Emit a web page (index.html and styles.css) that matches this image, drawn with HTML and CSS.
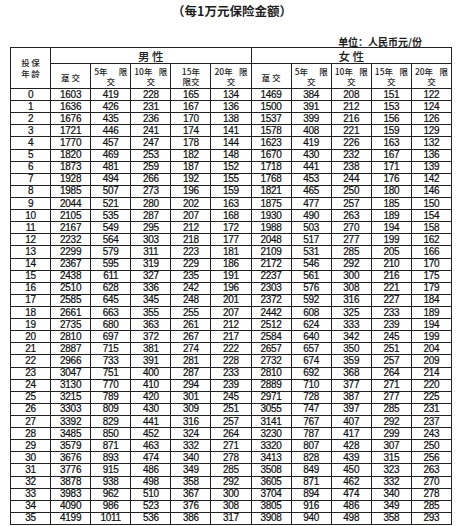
FILE: index.html
```html
<!DOCTYPE html>
<html lang="zh-CN">
<head>
<meta charset="utf-8">
<title>每1万元保险金额</title>
<link rel="stylesheet" href="styles.css">
</head>
<body>
<div class="page">
  <div class="title">（每1万元保险金额）</div>
  <div class="unit">单位：人民币元/份</div>
  <div class="grid">
    <div class="c h age"><span>投保</span><span>年龄</span></div>
    <div class="c h sex male">男性</div>
    <div class="c h sex female">女性</div>

    <div class="c h sub"><span class="one">趸交</span></div>
    <div class="c h sub"><span class="l1"><span>5年</span><span>限</span></span><span class="l2">交</span></div>
    <div class="c h sub"><span class="l1"><span>10年</span><span>限</span></span><span class="l2">交</span></div>
    <div class="c h sub"><span class="l2">15年</span><span class="l2">限交</span></div>
    <div class="c h sub"><span class="l1"><span>20年</span><span>限</span></span><span class="l2">交</span></div>
    <div class="c h sub"><span class="one">趸交</span></div>
    <div class="c h sub"><span class="l1"><span>5年</span><span>限</span></span><span class="l2">交</span></div>
    <div class="c h sub"><span class="l1"><span>10年</span><span>限</span></span><span class="l2">交</span></div>
    <div class="c h sub"><span class="l1"><span>15年</span><span>限</span></span><span class="l2">交</span></div>
    <div class="c h sub"><span class="l1"><span>20年</span><span>限</span></span><span class="l2">交</span></div>

    <div class="r"><span>0</span><span>1603</span><span>419</span><span>228</span><span>165</span><span>134</span><span>1469</span><span>384</span><span>208</span><span>151</span><span>122</span></div>
    <div class="r"><span>1</span><span>1636</span><span>426</span><span>231</span><span>167</span><span>136</span><span>1500</span><span>391</span><span>212</span><span>153</span><span>124</span></div>
    <div class="r"><span>2</span><span>1676</span><span>435</span><span>236</span><span>170</span><span>138</span><span>1537</span><span>399</span><span>216</span><span>156</span><span>126</span></div>
    <div class="r"><span>3</span><span>1721</span><span>446</span><span>241</span><span>174</span><span>141</span><span>1578</span><span>408</span><span>221</span><span>159</span><span>129</span></div>
    <div class="r"><span>4</span><span>1770</span><span>457</span><span>247</span><span>178</span><span>144</span><span>1623</span><span>419</span><span>226</span><span>163</span><span>132</span></div>
    <div class="r"><span>5</span><span>1820</span><span>469</span><span>253</span><span>182</span><span>148</span><span>1670</span><span>430</span><span>232</span><span>167</span><span>136</span></div>
    <div class="r"><span>6</span><span>1873</span><span>481</span><span>259</span><span>187</span><span>152</span><span>1718</span><span>441</span><span>238</span><span>171</span><span>139</span></div>
    <div class="r"><span>7</span><span>1928</span><span>494</span><span>266</span><span>192</span><span>155</span><span>1768</span><span>453</span><span>244</span><span>176</span><span>142</span></div>
    <div class="r"><span>8</span><span>1985</span><span>507</span><span>273</span><span>196</span><span>159</span><span>1821</span><span>465</span><span>250</span><span>180</span><span>146</span></div>
    <div class="r"><span>9</span><span>2044</span><span>521</span><span>280</span><span>202</span><span>163</span><span>1875</span><span>477</span><span>257</span><span>185</span><span>150</span></div>
    <div class="r"><span>10</span><span>2105</span><span>535</span><span>287</span><span>207</span><span>168</span><span>1930</span><span>490</span><span>263</span><span>189</span><span>154</span></div>
    <div class="r"><span>11</span><span>2167</span><span>549</span><span>295</span><span>212</span><span>172</span><span>1988</span><span>503</span><span>270</span><span>194</span><span>158</span></div>
    <div class="r"><span>12</span><span>2232</span><span>564</span><span>303</span><span>218</span><span>177</span><span>2048</span><span>517</span><span>277</span><span>199</span><span>162</span></div>
    <div class="r"><span>13</span><span>2299</span><span>579</span><span>311</span><span>223</span><span>181</span><span>2109</span><span>531</span><span>285</span><span>205</span><span>166</span></div>
    <div class="r"><span>14</span><span>2367</span><span>595</span><span>319</span><span>229</span><span>186</span><span>2172</span><span>546</span><span>292</span><span>210</span><span>170</span></div>
    <div class="r"><span>15</span><span>2438</span><span>611</span><span>327</span><span>235</span><span>191</span><span>2237</span><span>561</span><span>300</span><span>216</span><span>175</span></div>
    <div class="r"><span>16</span><span>2510</span><span>628</span><span>336</span><span>242</span><span>196</span><span>2303</span><span>576</span><span>308</span><span>221</span><span>179</span></div>
    <div class="r"><span>17</span><span>2585</span><span>645</span><span>345</span><span>248</span><span>201</span><span>2372</span><span>592</span><span>316</span><span>227</span><span>184</span></div>
    <div class="r"><span>18</span><span>2661</span><span>663</span><span>355</span><span>255</span><span>207</span><span>2442</span><span>608</span><span>325</span><span>233</span><span>189</span></div>
    <div class="r"><span>19</span><span>2735</span><span>680</span><span>363</span><span>261</span><span>212</span><span>2512</span><span>624</span><span>333</span><span>239</span><span>194</span></div>
    <div class="r"><span>20</span><span>2810</span><span>697</span><span>372</span><span>267</span><span>217</span><span>2584</span><span>640</span><span>342</span><span>245</span><span>199</span></div>
    <div class="r"><span>21</span><span>2887</span><span>715</span><span>381</span><span>274</span><span>222</span><span>2657</span><span>657</span><span>350</span><span>251</span><span>204</span></div>
    <div class="r"><span>22</span><span>2966</span><span>733</span><span>391</span><span>281</span><span>228</span><span>2732</span><span>674</span><span>359</span><span>257</span><span>209</span></div>
    <div class="r"><span>23</span><span>3047</span><span>751</span><span>400</span><span>287</span><span>233</span><span>2810</span><span>692</span><span>368</span><span>264</span><span>214</span></div>
    <div class="r"><span>24</span><span>3130</span><span>770</span><span>410</span><span>294</span><span>239</span><span>2889</span><span>710</span><span>377</span><span>271</span><span>220</span></div>
    <div class="r"><span>25</span><span>3215</span><span>789</span><span>420</span><span>301</span><span>245</span><span>2971</span><span>728</span><span>387</span><span>277</span><span>225</span></div>
    <div class="r"><span>26</span><span>3303</span><span>809</span><span>430</span><span>309</span><span>251</span><span>3055</span><span>747</span><span>397</span><span>285</span><span>231</span></div>
    <div class="r"><span>27</span><span>3392</span><span>829</span><span>441</span><span>316</span><span>257</span><span>3141</span><span>767</span><span>407</span><span>292</span><span>237</span></div>
    <div class="r"><span>28</span><span>3485</span><span>850</span><span>452</span><span>324</span><span>264</span><span>3230</span><span>787</span><span>417</span><span>299</span><span>243</span></div>
    <div class="r"><span>29</span><span>3579</span><span>871</span><span>463</span><span>332</span><span>271</span><span>3320</span><span>807</span><span>428</span><span>307</span><span>250</span></div>
    <div class="r"><span>30</span><span>3676</span><span>893</span><span>474</span><span>340</span><span>278</span><span>3413</span><span>828</span><span>439</span><span>315</span><span>256</span></div>
    <div class="r"><span>31</span><span>3776</span><span>915</span><span>486</span><span>349</span><span>285</span><span>3508</span><span>849</span><span>450</span><span>323</span><span>263</span></div>
    <div class="r"><span>32</span><span>3878</span><span>938</span><span>498</span><span>358</span><span>292</span><span>3605</span><span>871</span><span>462</span><span>332</span><span>270</span></div>
    <div class="r"><span>33</span><span>3983</span><span>962</span><span>510</span><span>367</span><span>300</span><span>3704</span><span>894</span><span>474</span><span>340</span><span>278</span></div>
    <div class="r"><span>34</span><span>4090</span><span>986</span><span>523</span><span>376</span><span>308</span><span>3805</span><span>916</span><span>486</span><span>349</span><span>285</span></div>
    <div class="r"><span>35</span><span>4199</span><span>1011</span><span>536</span><span>386</span><span>317</span><span>3908</span><span>940</span><span>498</span><span>358</span><span>293</span></div>
  </div>
</div>
</body>
</html>
```
FILE: styles.css
```css
html, body {
  margin: 0;
  padding: 0;
  background: #ffffff;
}
.page {
  width: 464px;
  height: 526px;
  overflow: hidden;
  color: #1a1a1a;
  font-family: "Noto Sans CJK SC", "Liberation Sans", sans-serif;
}
.title {
  height: 22px;
  line-height: 22px;
  text-align: center;
  font-size: 12.5px;
  font-weight: bold;
  color: #1e1e1e;
}
.unit {
  margin-top: 15px;
  height: 10px;
  line-height: 10px;
  text-align: right;
  padding-right: 42px;
  font-size: 10px;
  font-weight: bold;
  color: #1e1e1e;
}
.grid {
  margin-left: 10px;
  width: 441px;
  border-left: 1px solid #222;
  border-top: 1px solid #222;
  display: grid;
  grid-template-columns: repeat(11, 1fr);
  grid-template-rows: 16px 25px;
  grid-auto-rows: 12.11px;
}
.r {
  display: contents;
}
.c, .r > span {
  box-sizing: border-box;
  border-right: 1px solid #222;
  border-bottom: 1px solid #222;
  display: flex;
  align-items: center;
  justify-content: center;
  overflow: hidden;
}
.r > span {
  font-family: "Liberation Sans", sans-serif;
  font-size: 10px;
  line-height: 10px;
  letter-spacing: -0.3px;
  color: #0d0d0d;
  -webkit-text-stroke: 0.2px #0d0d0d;
}
.h {
  font-weight: 500;
  color: #1e1e1e;
}
.age {
  grid-row: 1 / span 2;
  flex-direction: column;
  font-size: 8.5px;
  line-height: 11px;
  letter-spacing: 1.5px;
  padding-left: 1.5px;
}
.sex {
  grid-column: span 5;
  font-size: 11.5px;
  letter-spacing: 2.5px;
  padding-left: 2.5px;
}
.sub {
  flex-direction: column;
  align-items: stretch;
  font-size: 8.5px;
  line-height: 10.5px;
}
.sub .one {
  text-align: center;
  letter-spacing: 2px;
  padding-left: 2px;
  padding-top: 2px;
}
.sub .l1 {
  display: flex;
  justify-content: space-between;
  padding: 0 3px;
}
.sub .l2 {
  text-align: center;
}
```
